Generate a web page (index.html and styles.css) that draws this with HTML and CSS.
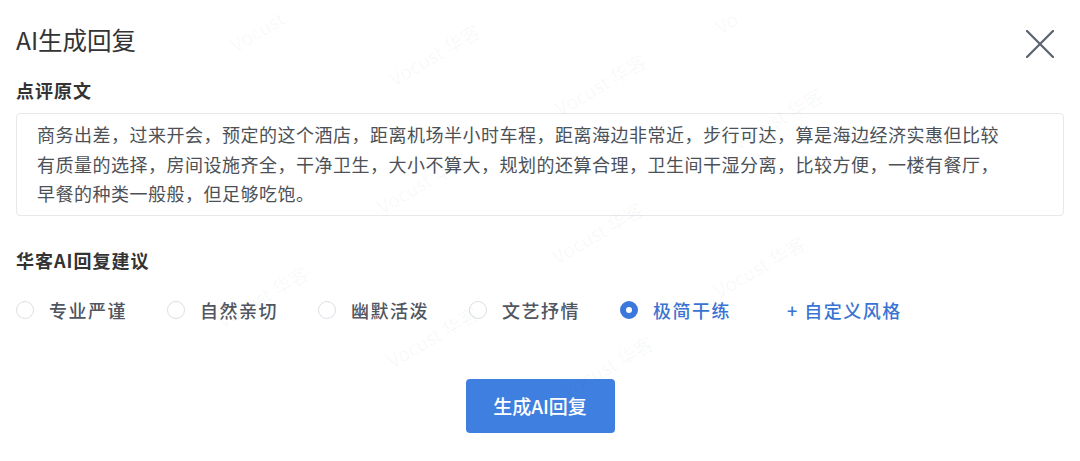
FILE: index.html
```html
<!DOCTYPE html>
<html>
<head>
<meta charset="utf-8">
<link rel="stylesheet" href="styles.css">
</head>
<body>

<div class="dialog">
	<div class="dialog-head">
		<h2 class="dialog-title">AI生成回复</h2>
		<button class="close" type="button" aria-label="关闭">
			<svg width="28" height="28" viewBox="0 0 28 28"><path d="M1 1 L27 27 M27 1 L1 27" stroke="#5c6170" stroke-width="2.2" stroke-linecap="round" fill="none"/></svg>
		</button>
	</div>

	<h3 class="section-label">点评原文</h3>
	<div class="review-box">商务出差，过来开会，预定的这个酒店，距离机场半小时车程，距离海边非常近，步行可达，算是海边经济实惠但比较<br>有质量的选择，房间设施齐全，干净卫生，大小不算大，规划的还算合理，卫生间干湿分离，比较方便，一楼有餐厅，<br>早餐的种类一般般，但足够吃饱。</div>

	<h3 class="section-label suggest">华客AI回复建议</h3>
	<div class="style-row">
		<label class="style-opt"><span class="radio"></span><span>专业严谨</span></label>
		<label class="style-opt"><span class="radio"></span><span>自然亲切</span></label>
		<label class="style-opt"><span class="radio"></span><span>幽默活泼</span></label>
		<label class="style-opt"><span class="radio"></span><span>文艺抒情</span></label>
		<label class="style-opt checked"><span class="radio"></span><span>极简干练</span></label>
		<a class="custom-style">+ 自定义风格</a>
	</div>

	<div class="actions">
		<button class="primary" type="button">生成AI回复</button>
	</div>

	<div class="watermarks">
		<span>Vocust</span>
		<span>Vocust 华客</span>
		<span>Vocust 华客</span>
		<span>Vo</span>
		<span>Vocust 华客</span>
		<span>Vocust 华客</span>
		<span>Vocust 华客</span>
		<span>Vocust 华客</span>
		<span>Vocust 华客</span>
		<span>Vocust 华客</span>
		<span>Vocust 华客</span>
	</div>
</div>

</body>
</html>
```

FILE: styles.css
```css
body {
  margin: 0;
  background: #fff;
  font-family: "Noto Sans CJK SC", "Noto Sans", sans-serif;
  color: #333;
}

.dialog {
  position: relative;
  height: 461px;
  overflow: hidden;
  padding: 0 16px;
}

.dialog-head {
  display: flex;
  justify-content: space-between;
  align-items: flex-start;
  padding-top: 24px;
}

.dialog-title {
  margin: 0;
  font-size: 24.5px;
  font-weight: normal;
  line-height: 32px;
  color: #333;
}

.close {
  border: none;
  background: none;
  padding: 0;
  margin: 6px 10px 0 0;
  width: 28px;
  height: 28px;
  cursor: pointer;
}

.section-label {
  margin: 20px 0 0 0;
  font-size: 18px;
  line-height: 24px;
  font-weight: bold;
  letter-spacing: 1px;
  color: #333;
}

.section-label.suggest {
  margin-top: 32px;
}

.review-box {
  margin-top: 11px;
  border: 1px solid #e6e8eb;
  border-radius: 4px;
  padding: 6px 10px 6px 20px;
  font-size: 18px;
  line-height: 29.5px;
  letter-spacing: 0.5px;
  color: #4c5157;
  white-space: nowrap;
}

.style-row {
  display: flex;
  align-items: center;
  margin-top: 26px;
  height: 24px;
  gap: 40px;
}

.style-opt {
  display: flex;
  align-items: center;
  gap: 15px;
  font-size: 18px;
  font-weight: 500;
  letter-spacing: 1.5px;
  color: #50555f;
  cursor: pointer;
}

.radio {
  box-sizing: border-box;
  width: 18px;
  height: 18px;
  border: 1px solid #dcdfe4;
  border-radius: 50%;
  background: #fff;
}

.style-opt.checked {
  color: #3a74d2;
}

.style-opt.checked .radio {
  border: 6px solid #3a78dc;
}

.custom-style {
  margin-left: 16px;
  font-size: 18px;
  font-weight: 500;
  letter-spacing: 1.5px;
  color: #3a74d2;
  cursor: pointer;
}

.actions {
  display: flex;
  justify-content: center;
  margin-top: 57px;
}

.primary {
  width: 149px;
  height: 54px;
  border: none;
  border-radius: 4px;
  background: #3f7fe0;
  color: #fff;
  font-family: inherit;
  font-size: 19px;
  font-weight: 500;
  cursor: pointer;
}

.watermarks {
  position: absolute;
  inset: 0;
  pointer-events: none;
}

.watermarks span {
  position: absolute;
  font-size: 19px;
  color: rgba(60, 70, 90, 0.045);
  white-space: nowrap;
  transform-origin: 0 100%;
  transform: rotate(-30deg);
}

.watermarks span:nth-child(1) { left: 238px; top: 30px; }
.watermarks span:nth-child(2) { left: 397px; top: 64px; }
.watermarks span:nth-child(3) { left: 563px; top: 94px; }
.watermarks span:nth-child(4) { left: 723px; top: 12px; }
.watermarks span:nth-child(5) { left: 385px; top: 192px; }
.watermarks span:nth-child(6) { left: 560px; top: 242px; }
.watermarks span:nth-child(7) { left: 722px; top: 276px; }
.watermarks span:nth-child(8) { left: 225px; top: 306px; }
.watermarks span:nth-child(9) { left: 395px; top: 346px; }
.watermarks span:nth-child(10) { left: 570px; top: 376px; }
.watermarks span:nth-child(11) { left: 740px; top: 128px; }
```
